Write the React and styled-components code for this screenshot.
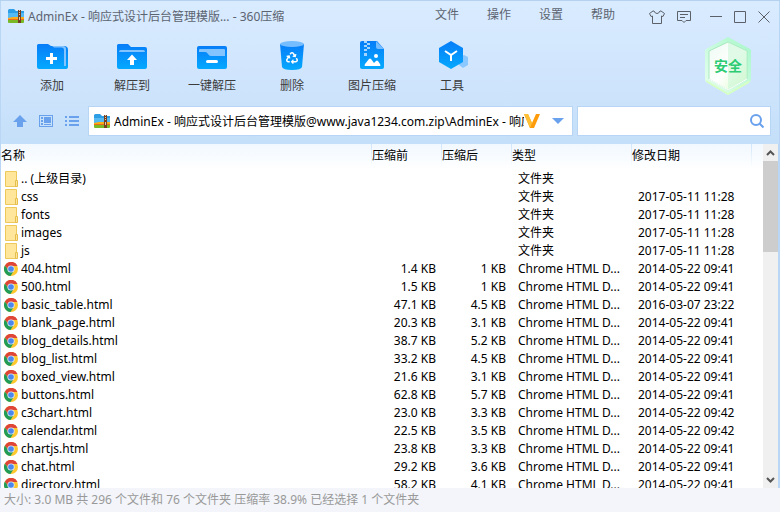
import React from 'react';
import styled, { createGlobalStyle } from 'styled-components';
import { FaRecycle } from 'react-icons/fa';

const GlobalStyle = createGlobalStyle`
  *, *::before, *::after { box-sizing: border-box; }
  body { margin: 0; font: 12px/18px "Noto Sans", "Noto Sans CJK SC", sans-serif; color: #000; }
  button, input { font: inherit; color: inherit; }
  svg { display: block; flex: none; }
`;

const Window = styled.div`
  display: flex;
  flex-direction: column;
  height: 100vh;
  overflow: hidden;
  border-top: 1px solid #b4d2f0;
  background: #c4dff9;
`;

const Chrome = styled.header`
  border: solid #b9d6f4;
  border-width: 0 1px;
  background: linear-gradient(#d9ebff, #cee4fc 60%, #c4dff9);
`;

const TitleBar = styled.div`
  display: flex;
  align-items: center;
  height: 30px;
  padding: 0 9px 0 7px;
`;

const Title = styled.h1`
  flex: 1;
  margin: 0 0 0 4px;
  padding-top: 2px;
  font-size: 12px;
  font-weight: 400;
  line-height: 18px;
  color: #5c6470;
  white-space: nowrap;
`;

const PlainButton = styled.button`
  display: flex;
  align-items: center;
  justify-content: center;
  padding: 0;
  border: 0;
  background: none;
`;

const Menu = styled.nav`
  display: flex;
  gap: 28px;
  margin-right: 34px;
  padding-bottom: 2px;
  color: #5c6470;
`;

const WindowButtons = styled.div`
  display: flex;
  gap: 12px;
  padding-top: 1px;
  color: #5c6068;
`;

const TopicButtons = styled(WindowButtons)`
  margin-right: 19px;
`;

const ToolBar = styled.div`
  display: flex;
  align-items: flex-start;
  height: 75px;
  padding: 0 28px 0 11px;
`;

const ToolButton = styled(PlainButton)`
  flex-direction: column;
  gap: 4px;
  width: 80px;
  padding-top: 8px;
  color: #3c3c3c;
`;

const SafeBadge = styled(PlainButton)`
  display: grid;
  margin: 6px 0 0 auto;
  > * { grid-area: 1 / 1; }
`;

const BadgeText = styled.span`
  align-self: center;
  font-size: 14px;
  font-weight: 700;
  color: #2dcb73;
`;

const AddressRow = styled.div`
  display: flex;
  align-items: center;
  height: 38px;
  padding: 0 8px 8px 11px;
`;

const NavButtons = styled.div`
  display: flex;
  gap: 10px;
  margin-right: 8px;
`;

const Field = styled.div`
  display: flex;
  align-items: center;
  height: 30px;
  border: 1px solid #b7d5f5;
  background: #fff;
`;

const AddressField = styled(Field)`
  flex: 1;
  padding: 0 8px 0 5px;
  gap: 4px;
`;

const SearchField = styled(Field)`
  width: 194px;
  margin-left: 4px;
  padding-right: 5px;
`;

const TextInput = styled.input`
  flex: 1;
  min-width: 0;
  height: 24px;
  padding: 0;
  border: 0;
  outline: 0;
  background: transparent;
`;

const DropButton = styled(PlainButton)`
  margin-left: 8px;
`;

const PathInput = styled(TextInput)`
  margin-right: -4px;
`;

const FilePane = styled.main`
  display: flex;
  flex: 1;
  min-height: 0;
  border: solid #b9d6f4;
  border-width: 0 2px 0 1px;
  background: #fff;
`;

const TableArea = styled.div`
  flex: 1;
  min-width: 0;
  overflow: hidden;
`;

const FileTable = styled.table`
  width: 100%;
  table-layout: fixed;
  border-collapse: separate;
  border-spacing: 0;
`;

const Col = styled.col`
  width: ${(p) => p.$width};
`;

const HeadCell = styled.th`
  height: 26px;
  padding: 0 0 2px;
  font-weight: 400;
  text-align: left;
  background:
    linear-gradient(#cfe4fa, #fff) right top / ${(p) => (p.$last ? '0' : '1px')} 24px no-repeat,
    linear-gradient(#f1f8ff, #fff);
`;

const Cell = styled.td`
  height: 18px;
  padding: 0 6px;
  text-align: ${(p) => p.$align || 'left'};
  white-space: nowrap;
`;

const NameCell = styled(Cell)`
  padding: 0 0 0 3px;
`;

const FileName = styled.span`
  display: flex;
  align-items: center;
  gap: 2px;
  height: 18px;
`;

const ScrollBar = styled.div`
  display: flex;
  flex-direction: column;
  width: 15px;
  background: #f0f0f0;
`;

const ScrollButton = styled(PlainButton)`
  height: 17px;
  color: #555;
`;

const Thumb = styled.div`
  height: 91px;
  margin-bottom: auto;
  background: #cdcdcd;
`;

const StatusBar = styled.footer`
  height: 24px;
  padding: 3px 4px;
  background: #f3f5fa;
  color: #999;
  white-space: nowrap;
`;

const ArchiveIcon = () => (
  <svg width="16" height="14" viewBox="0 0 16 14" aria-hidden="true">
    <path d="M0 1.5Q0 0 1.500 0H6l2 2h8v8H0z" fill="#2d9de5" />
    <path d="M0 4h16v6H0z" fill="#55b9f2" />
    <path d="M0 9l5-1h11v3H0z" fill="#ffad16" />
    <path d="M0 10h16v1H0z" fill="#ee6b17" />
    <path d="M0 11h16v2q0 1-1 1H1q-1 0-1-1z" fill="#79b928" />
    <path d="M10 1h3v13h-3z" fill="#74401f" />
    <path d="M11 1h1v1h-1zM11 3h1v1h-1zM11 5h1v1h-1zM11 8h1v3h-1z" fill="#e8c7a0" />
  </svg>
);

const ShirtIcon = () => (
  <svg width="16" height="14" viewBox="0 0 16 14" fill="none" stroke="currentColor">
    <path d="M5 1L4 1 .5 3.500 2 6.500l1.500-.5v7.500h9V6l1.500.5 1.500-3L12 1h-1Q10 3.500 8 3.500T5 1z" />
  </svg>
);
const CommentIcon = () => (
  <svg width="14" height="14" viewBox="0 0 14 14" fill="none" stroke="currentColor">
    <path d="M.5 1.500h13v9H9l-2 2-2-2H.5zM3 4.500h8M3 7.500h5" />
  </svg>
);
const MinimizeIcon = () => (
  <svg width="12" height="14" viewBox="0 0 12 14" stroke="currentColor"><path d="M0 6.500h12" /></svg>
);
const MaximizeIcon = () => (
  <svg width="12" height="14" viewBox="0 0 12 14" fill="none" stroke="currentColor"><path d="M.5 1.500h11v11H.5z" /></svg>
);
const CloseIcon = () => (
  <svg width="12" height="14" viewBox="0 0 12 14" stroke="currentColor"><path d="M.5 1.500l11 11M11.500 1.500l-11 11" /></svg>
);

const ToolSvg = ({ children }) => (
  <svg width="32" height="34" viewBox="0 0 32 34" aria-hidden="true">
    <defs>
      <linearGradient id="blue" x1="0" y1="0" x2="0" y2="1">
        <stop offset="0" stopColor="#077df8" />
        <stop offset="1" stopColor="#04a9ff" />
      </linearGradient>
    </defs>
    {children}
  </svg>
);

const AddIcon = () => (
  <ToolSvg>
    <path d="M1 6.500Q1 5 2.500 5H12l3 2h13q4 0 4 4v17q0 2-2 2H3q-2 0-2-2z" fill="url(#blue)" />
    <path d="M16 7h11q3 0 3 3v17h-2V11q0-2.500-2.500-2.500H18z" fill="#83c4ff" />
    <path d="M15.500 14v11M10 19.500h11" stroke="#fff" strokeWidth="3" />
  </ToolSvg>
);
const ExtractIcon = () => (
  <ToolSvg>
    <path d="M1 6.500Q1 5 2.500 5H12l3 3h14q2 0 2 2v18q0 2-2 2H3q-2 0-2-2z" fill="url(#blue)" />
    <path d="M3 13q0-2 2-2h22q2 0 2 2z" fill="#83c4ff" />
    <path d="M16 15.500l5 5.500h-3v5h-4v-5h-3z" fill="#fff" />
  </ToolSvg>
);
const OneKeyIcon = () => (
  <ToolSvg>
    <rect x="1" y="7" width="30" height="23" rx="2" fill="url(#blue)" />
    <path d="M3 11q0-1 1-1h24q1 0 1 1v6H15q-2 0-3-2t-3-2H3z" fill="#83c4ff" />
    <path d="M11.500 22.500h9" stroke="#fff" strokeWidth="3" strokeLinecap="round" />
  </ToolSvg>
);
const DeleteIcon = () => (
  <ToolSvg>
    <path d="M4 5h24l-2 23q-1 3-10 3T6 28z" fill="url(#blue)" />
    <ellipse cx="16" cy="5" rx="12" ry="3" fill="#75bdff" />
    <FaRecycle x="10" y="13" size="12" color="#fff" />
  </ToolSvg>
);
const ImageIcon = () => (
  <ToolSvg>
    <path d="M6 2h15l7 8v18q0 2-2 2H6q-2 0-2-2V4q0-2 2-2z" fill="url(#blue)" />
    <path d="M20 2l8 8h-6q-2 0-2-2z" fill="#75bdff" />
    <path d="M8 2h3v2H8zM11 4h3v2h-3zM8 6h3v2H8zM11 8h3v2h-3zM8 10h3v2H8zM8 14h3v3H8z" fill="#a5d4ff" />
    <circle cx="20" cy="17" r="2" fill="#fff" />
    <path d="M9 27q-1 0 0-2l4-5q1-1 2 0l3 4 2-2q1-1 2 0l2 3q1 2 0 2z" fill="#fff" />
  </ToolSvg>
);
const ToolsIcon = () => (
  <ToolSvg>
    <path d="M24 18l4-2 4 2v8l-5 3-4-3z" fill="#8bc8ff" />
    <path d="M15 2l12 7v14l-12 7-12-7V9z" fill="url(#blue)" />
    <path d="M9 12l6 4 6-4M15 16v6" fill="none" stroke="#fff" strokeWidth="2" />
  </ToolSvg>
);

const ShieldIcon = () => (
  <svg width="46" height="58" viewBox="0 0 46 58" aria-hidden="true">
    <defs>
      <linearGradient id="rim" x1="0" y1="1" x2="1" y2="0">
        <stop offset="0" stopColor="#eafff0" /><stop offset="1" stopColor="#a5f7c9" />
      </linearGradient>
      <linearGradient id="face" x1="0" y1="0" x2="1" y2="1">
        <stop offset="0" stopColor="#edfbf2" /><stop offset=".5" stopColor="#fff" /><stop offset="1" stopColor="#d9fcc8" />
      </linearGradient>
    </defs>
    <path d="M23 0l22 12q1 0 1 2v28q0 2-1 3L23 58 1 45q-1-1-1-3V14q0-2 1-2z" fill="url(#rim)" />
    <path d="M23 5l19 9v28L23 53 4 42V14z" fill="url(#face)" stroke="#a9e8c0" />
    <path d="M23 5l19 9v28L23 53z" fill="#c8f5d5" opacity=".55" />
    <path d="M4 42l19 11 19-11" fill="none" stroke="#fff" />
    <path d="M1 43l22 13 22-13-1 3-21 12L1 45z" fill="#d6ffc4" />
  </svg>
);

const UpIcon = () => (
  <svg width="16" height="14" viewBox="0 0 16 14" fill="#69a1ed"><path d="M8 1l7 7h-4v5H5V8H1z" /></svg>
);
const ViewIcon = () => (
  <svg width="16" height="14" viewBox="0 0 16 14" fill="#69a1ed">
    <path fillRule="evenodd" d="M1 1h14v12H1zM2 2v10h12V2z" />
    <path d="M3 3h2v2H3zM3 6h2v2H3zM3 9h2v2H3zM6 3h7v6H6zM6 10h7v1H6z" />
  </svg>
);
const ListIcon = () => (
  <svg width="16" height="14" viewBox="0 0 16 14" fill="#69a1ed">
    <path d="M1 2h2v2H1zM1 6h2v2H1zM1 10h2v2H1zM5 2h10v2H5zM5 6h10v2H5zM5 10h10v2H5z" />
  </svg>
);
const VLogo = () => (
  <svg width="16" height="14" viewBox="0 0 16 14" aria-hidden="true">
    <path d="M0 0h4l4 9 4-9h4l-6 14H6z" fill="#ff9c0b" />
    <path d="M0 0h4l4 9-2 5z" fill="#ffc036" />
  </svg>
);
const DropIcon = () => (
  <svg width="12" height="6" viewBox="0 0 12 6"><path d="M0 0h12L6 6z" fill="#69a1ed" /></svg>
);
const SearchIcon = () => (
  <svg width="16" height="16" viewBox="0 0 16 16" fill="none" stroke="#69a1ed" strokeWidth="2">
    <circle cx="7" cy="7" r="5" /><path d="M10.500 10.500l4 4" />
  </svg>
);
const FolderIcon = () => (
  <svg width="15" height="16" viewBox="0 0 15 16" aria-hidden="true">
    <path d="M1.500.5h11v15h-11z" fill="#ffe69b" stroke="#edc85a" />
    <path d="M11.500 9.500h2v6h-2z" fill="#ffe69b" stroke="#e5be4d" />
  </svg>
);
const ChromeIcon = () => (
  <svg width="15" height="15" viewBox="0 0 15 15" aria-hidden="true">
    <circle cx="7" cy="7" r="7" fill="#fdc92e" />
    <path d="M.9 3.500A7 7 0 0 1 13.500 4H7L4.500 8.500z" fill="#df4638" />
    <path d="M.9 3.500A7 7 0 0 0 6.500 14L10 8.500H4.500z" fill="#209c58" />
    <circle cx="7" cy="7" r="3.600" fill="#e4ebf5" />
    <circle cx="7" cy="7" r="2.800" fill="#4a87ee" />
  </svg>
);
const Chevron = ({ down }) => (
  <svg width="9" height="8" viewBox="0 0 9 8" fill="none" stroke="currentColor" strokeWidth="2">
    <path d={down ? 'M1 2l3.500 3.500L8 2' : 'M1 6l3.500-3.500L8 6'} />
  </svg>
);

const menus = ['文件', '操作', '设置', '帮助'];
const topicButtons = [['换肤', ShirtIcon], ['反馈', CommentIcon]];
const windowButtons = [['最小化', MinimizeIcon], ['最大化', MaximizeIcon], ['关闭', CloseIcon]];
const tools = [
  ['添加', AddIcon], ['解压到', ExtractIcon], ['一键解压', OneKeyIcon],
  ['删除', DeleteIcon], ['图片压缩', ImageIcon], ['工具', ToolsIcon],
];
const navs = [['向上', UpIcon], ['视图', ViewIcon], ['列表', ListIcon]];

const folder = (name, date = '2017-05-11 11:28') => ({ name, before: '', after: '', type: '文件夹', date, folder: true });
const html = (name, before, after, date = '2014-05-22 09:41') => ({
  name: `${name}.html`, before: `${before} KB`, after: `${after} KB`, type: 'Chrome HTML D...', date,
});
const files = [
  folder('.. (上级目录)', ''), folder('css'), folder('fonts'), folder('images'), folder('js'),
  html('404', '1.4', '1'),
  html('500', '1.5', '1'),
  html('basic_table', '47.1', '4.5', '2016-03-07 23:22'),
  html('blank_page', '20.3', '3.1'),
  html('blog_details', '38.7', '5.2'),
  html('blog_list', '33.2', '4.5'),
  html('boxed_view', '21.6', '3.1'),
  html('buttons', '62.8', '5.7'),
  html('c3chart', '23.0', '3.3', '2014-05-22 09:42'),
  html('calendar', '22.5', '3.5', '2014-05-22 09:42'),
  html('chartjs', '23.8', '3.3'),
  html('chat', '29.2', '3.6'),
  html('directory', '58.2', '4.1'),
];

const IconButtons = ({ items }) => items.map(([label, Icon]) => (
  <PlainButton key={label} aria-label={label}><Icon /></PlainButton>
));

export default function App() {
  return (
    <Window>
      <GlobalStyle />
      <Chrome>
        <TitleBar>
          <ArchiveIcon />
          <Title>AdminEx - 响应式设计后台管理模版... - 360压缩</Title>
          <Menu>{menus.map((m) => <PlainButton key={m}>{m}</PlainButton>)}</Menu>
          <TopicButtons><IconButtons items={topicButtons} /></TopicButtons>
          <WindowButtons><IconButtons items={windowButtons} /></WindowButtons>
        </TitleBar>
        <ToolBar>
          {tools.map(([label, Icon]) => (
            <ToolButton key={label}><Icon />{label}</ToolButton>
          ))}
          <SafeBadge><ShieldIcon /><BadgeText>安全</BadgeText></SafeBadge>
        </ToolBar>
        <AddressRow>
          <NavButtons><IconButtons items={navs} /></NavButtons>
          <AddressField>
            <ArchiveIcon />
            <PathInput aria-label="路径" defaultValue="AdminEx - 响应式设计后台管理模版@www.java1234.com.zip\AdminEx - 响应式设计后台管理模版" />
            <VLogo />
            <DropButton aria-label="展开路径"><DropIcon /></DropButton>
          </AddressField>
          <SearchField>
            <TextInput type="text" aria-label="搜索" />
            <PlainButton aria-label="开始搜索"><SearchIcon /></PlainButton>
          </SearchField>
        </AddressRow>
      </Chrome>
      <FilePane>
        <TableArea>
          <FileTable>
            <colgroup>
              <Col $width="auto" /><Col $width="70px" /><Col $width="70px" />
              <Col $width="120px" /><Col $width="120px" /><Col $width="11px" />
            </colgroup>
            <thead>
              <tr>
                <HeadCell>名称</HeadCell><HeadCell>压缩前</HeadCell><HeadCell>压缩后</HeadCell>
                <HeadCell>类型</HeadCell><HeadCell>修改日期</HeadCell><HeadCell $last />
              </tr>
            </thead>
            <tbody>
              {files.map((f) => (
                <tr key={f.name}>
                  <NameCell>
                    <FileName>{f.folder ? <FolderIcon /> : <ChromeIcon />}{f.name}</FileName>
                  </NameCell>
                  <Cell $align="right">{f.before}</Cell>
                  <Cell $align="right">{f.after}</Cell>
                  <Cell>{f.type}</Cell>
                  <Cell>{f.date}</Cell>
                  <Cell />
                </tr>
              ))}
            </tbody>
          </FileTable>
        </TableArea>
        <ScrollBar>
          <ScrollButton aria-label="向上滚动"><Chevron /></ScrollButton>
          <Thumb />
          <ScrollButton aria-label="向下滚动"><Chevron down /></ScrollButton>
        </ScrollBar>
      </FilePane>
      <StatusBar>大小: 3.0 MB 共 296 个文件和 76 个文件夹 压缩率 38.9% 已经选择 1 个文件夹</StatusBar>
    </Window>
  );
}
